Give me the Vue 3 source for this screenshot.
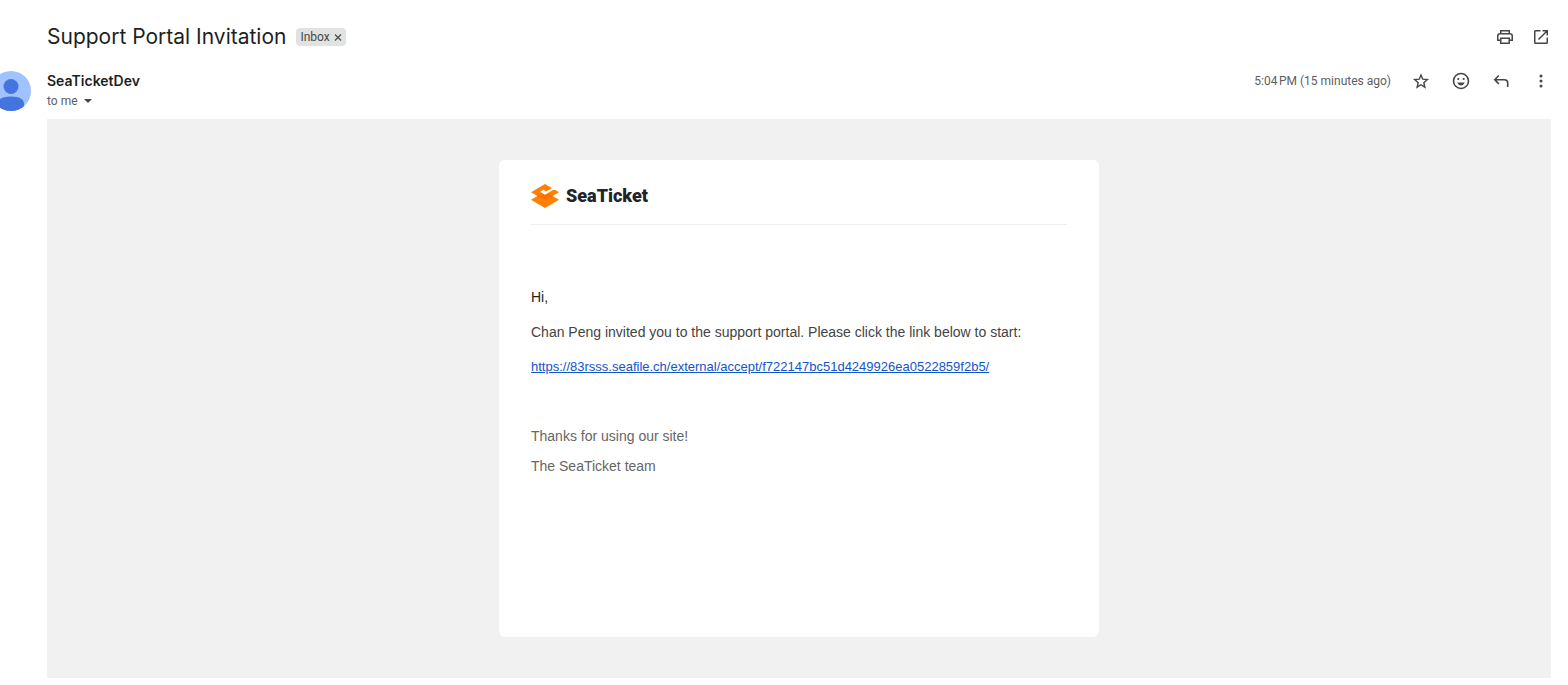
<script setup>
const acceptUrl = 'https://83rsss.seafile.ch/external/accept/f722147bc51d4249926ea0522859f2b5/'
</script>

<template>
  <main class="message">
    <header class="subject-row">
      <h1 class="subject">Support Portal Invitation</h1>
      <span class="label">
        Inbox
        <button class="label-remove" type="button" aria-label="Remove label Inbox">
          <svg width="8" height="8" viewBox="0 0 8 8"><path d="M1 1.500l6 6M7 1.500l-6 6" stroke="#444746" stroke-width="1.1" /></svg>
        </button>
      </span>
      <div class="page-actions">
        <button class="icon" type="button" aria-label="Print all">
          <svg width="20" height="20" viewBox="0 0 20 20" fill="none" stroke="#444746" stroke-width="1.5">
            <path d="M5.75 6.5V3.75h8.5V6.5M5.5 13.25H2.75V9q0-2.25 2.25-2.25h10q2.25 0 2.25 2.25v4.25H14.5" />
            <path d="M5.75 11.25h8.5v5h-8.5z" />
          </svg>
        </button>
        <button class="icon" type="button" aria-label="Open in new window">
          <svg width="20" height="20" viewBox="0 0 20 20" fill="none" stroke="#444746" stroke-width="1.5">
            <path d="M9.500 3.750H4.500q-.75 0-.75.75v11q0 .75.75.75h11q.75 0 .75-.75v-5M11.500 3.750h4.750V8.500M16 4l-8.500 8.500" />
          </svg>
        </button>
      </div>
    </header>

    <section class="sender-row">
      <svg class="avatar" width="40" height="40" viewBox="0 0 40 40" role="img" aria-label="SeaTicketDev">
        <clipPath id="avatar-clip"><circle cx="20" cy="20" r="20" /></clipPath>
        <g clip-path="url(#avatar-clip)">
          <path fill="#a0c3ff" d="M0 0h40v40H0z" />
          <circle cx="20" cy="15.5" r="7.5" fill="#4374e0" />
          <path fill="#4374e0" d="M7 40v-7q0-7.500 13-7.500T33 33v7z" />
        </g>
      </svg>
      <div class="sender">
        <h2 class="sender-name">SeaTicketDev</h2>
        <button class="recipients" type="button" aria-label="Show details">
          to me
          <svg width="8" height="4" viewBox="0 0 8 4"><path d="M0 0h8L4 4z" fill="#444746" /></svg>
        </button>
      </div>
      <time class="time">5:04&#8239;PM (15 minutes ago)</time>
      <div class="message-actions">
        <button class="icon" type="button" aria-label="Star">
          <svg width="20" height="20" viewBox="0 0 20 20" fill="none" stroke="#444746" stroke-width="1.4">
            <path d="M10 4l1.750 4.200 4.600.4-3.500 3.050 1.050 4.500L10 13.750l-3.900 2.400 1.050-4.500-3.500-3.050 4.600-.4z" />
          </svg>
        </button>
        <button class="icon" type="button" aria-label="Add reaction">
          <svg width="20" height="20" viewBox="0 0 20 20">
            <circle cx="10" cy="10" r="7.500" fill="none" stroke="#444746" stroke-width="1.600" />
            <circle cx="7.300" cy="8" r="1.100" fill="#444746" />
            <circle cx="12.700" cy="8" r="1.100" fill="#444746" />
            <path d="M6.200 11.500h7.600q-1.200 2.900-3.800 2.900t-3.800-2.900z" fill="#444746" />
          </svg>
        </button>
        <button class="icon" type="button" aria-label="Reply">
          <svg width="20" height="20" viewBox="0 0 20 20" fill="none" stroke="#444746" stroke-width="1.600">
            <path d="M7.800 4.500L3.800 8.700l4 4.200M4 8.700h9.300q3.400 0 3.400 3.400V16" />
          </svg>
        </button>
        <button class="icon" type="button" aria-label="More">
          <svg width="20" height="20" viewBox="0 0 20 20" fill="#444746">
            <circle cx="10" cy="5" r="1.500" /><circle cx="10" cy="10" r="1.500" /><circle cx="10" cy="15" r="1.500" />
          </svg>
        </button>
      </div>
    </section>

    <div class="mail-body">
      <article class="card">
        <div class="brand">
          <svg width="28" height="24" viewBox="0 0 28 24" aria-hidden="true">
            <path fill="#ff8000" d="M0 15.700L14 7.700l14 8L14 24z" />
            <path fill="#ff8000" d="M0 8.300L14 0l14 8.300-14 8.200z" />
            <path fill="#ff7000" d="M6 12L14 7.700 22 12l-8 4.500z" />
            <path fill="#fff" d="M9 7.800l3.500-2 2.700 1.600L22 3.500l3.500 2.200-3.500.2-8 4.800z" />
          </svg>
          <span class="brand-name">SeaTicket</span>
        </div>
        <p class="greeting">Hi,</p>
        <p class="invite">Chan Peng invited you to the support portal. Please click the link below to start:</p>
        <a class="accept" :href="acceptUrl">{{ acceptUrl }}</a>
        <footer class="closing">
          <p>Thanks for using our site!</p>
          <p>The SeaTicket team</p>
        </footer>
      </article>
    </div>
  </main>
</template>

<style>
body {
  background: #fff;
}
</style>

<style scoped>
.message {
  padding: 24px 17px 7px 47px;
  font-family: Inter, "Open Sans", sans-serif;
  color: #1f1f1f;
}
h1, h2, p {
  margin: 0;
}
button {
  display: flex;
  align-items: center;
  padding: 0;
  border: 0;
  background: none;
  font: inherit;
  color: inherit;
  cursor: pointer;
}
.subject-row {
  display: flex;
  align-items: center;
  height: 26px;
}
.subject {
  font-size: 21px;
  font-weight: 400;
  line-height: 26px;
}
.label {
  display: flex;
  align-items: center;
  gap: 4px;
  height: 18px;
  margin-left: 10px;
  padding: 0 4px;
  border-radius: 4px;
  background: #e1e3e1;
  font-family: Roboto, sans-serif;
  font-size: 12px;
  color: #444746;
}
.page-actions {
  display: flex;
  gap: 16px;
  margin-left: auto;
}
.icon {
  width: 20px;
  height: 20px;
}
.sender-row {
  display: flex;
  align-items: flex-start;
  padding-top: 21px;
  height: 48px;
}
.avatar {
  flex: none;
  margin-left: -56px;
}
.sender {
  margin-left: 16px;
}
.sender-name {
  font-size: 14px;
  font-weight: 600;
  line-height: 20px;
}
.recipients,
.time {
  font-family: Roboto, sans-serif;
  font-size: 12px;
  line-height: 20px;
  color: #5e5e5e;
}
.recipients {
  gap: 6px;
}
.time {
  margin-left: auto;
}
.message-actions {
  display: flex;
  gap: 20px;
  margin-left: 20px;
}
.mail-body {
  padding: 41px 20px;
  background: #f1f1f1;
}
.card {
  box-sizing: border-box;
  max-width: 600px;
  min-height: 477px;
  margin: 0 auto;
  padding: 24px 32px;
  border-radius: 6px;
  background: #fff;
  font-family: "Liberation Sans", Arial, sans-serif;
  font-size: 14px;
  line-height: 20px;
  color: #444;
}
.brand {
  display: flex;
  align-items: center;
  gap: 7px;
  padding-bottom: 16px;
  border-bottom: 1px solid #eee;
}
.brand-name {
  font-family: Roboto, sans-serif;
  font-size: 18px;
  font-weight: 900;
  line-height: 24px;
  color: #212529;
}
.greeting {
  margin-top: 62px;
  color: #222;
}
.invite {
  margin-top: 15px;
}
.accept {
  display: block;
  margin-top: 15px;
  font-size: 13px;
  color: #15c;
  overflow-wrap: anywhere;
}
.closing {
  display: grid;
  gap: 10px;
  margin-top: 49px;
  color: #666;
}
</style>
